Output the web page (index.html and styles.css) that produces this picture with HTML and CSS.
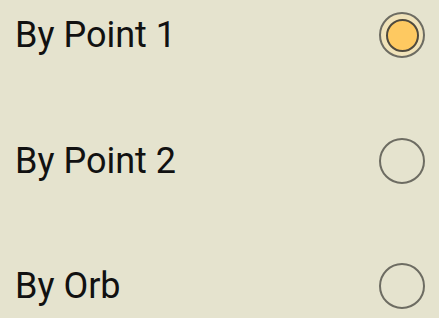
FILE: index.html
```html
<!DOCTYPE html>
<html lang="en">

<head>
    <meta charset="UTF-8">
    <meta name="viewport" content="width=device-width, initial-scale=1.0">
    <title>Mode</title>
    <link rel="stylesheet" href="styles.css">
</head>

<body>
    <section class="list">
        <label class="row">
            <span class="label">By Point 1</span>
            <input type="radio" name="mode" value="p1" checked>
            <span class="radio"></span>
        </label>
        <label class="row">
            <span class="label">By Point 2</span>
            <input type="radio" name="mode" value="p2">
            <span class="radio"></span>
        </label>
        <label class="row">
            <span class="label">By Orb</span>
            <input type="radio" name="mode" value="orb">
            <span class="radio"></span>
        </label>
    </section>
</body>

</html>
```

FILE: styles.css
```css
* {
    margin: 0;
    padding: 0;
    box-sizing: border-box;
}

body {
    background-color: #e5e3ce;
    font-family: Roboto, "Noto Sans", sans-serif;
    color: #111;
    width: 439px;
    height: 318px;
    overflow: hidden;
}

.list {
    display: flex;
    flex-direction: column;
    gap: 79.5px;
    padding: 12px 14px 0 15px;
}

.row {
    display: flex;
    justify-content: space-between;
    align-items: center;
    height: 46px;
    cursor: pointer;
}

.label {
    font-size: 36px;
    line-height: 46px;
}

.row input {
    display: none;
}

.radio {
    width: 46px;
    height: 46px;
    border-radius: 50%;
    border: 2px solid #6d6c62;
    display: flex;
    align-items: center;
    justify-content: center;
}

.row input:checked + .radio {
    background: radial-gradient(circle, #f3e3b4 40%, #ebe2c2 100%);
}

.row input:checked + .radio::after {
    content: "";
    width: 29px;
    height: 29px;
    border-radius: 50%;
    background: #fec961;
    border: 2px solid #4f4a3e;
}
```
